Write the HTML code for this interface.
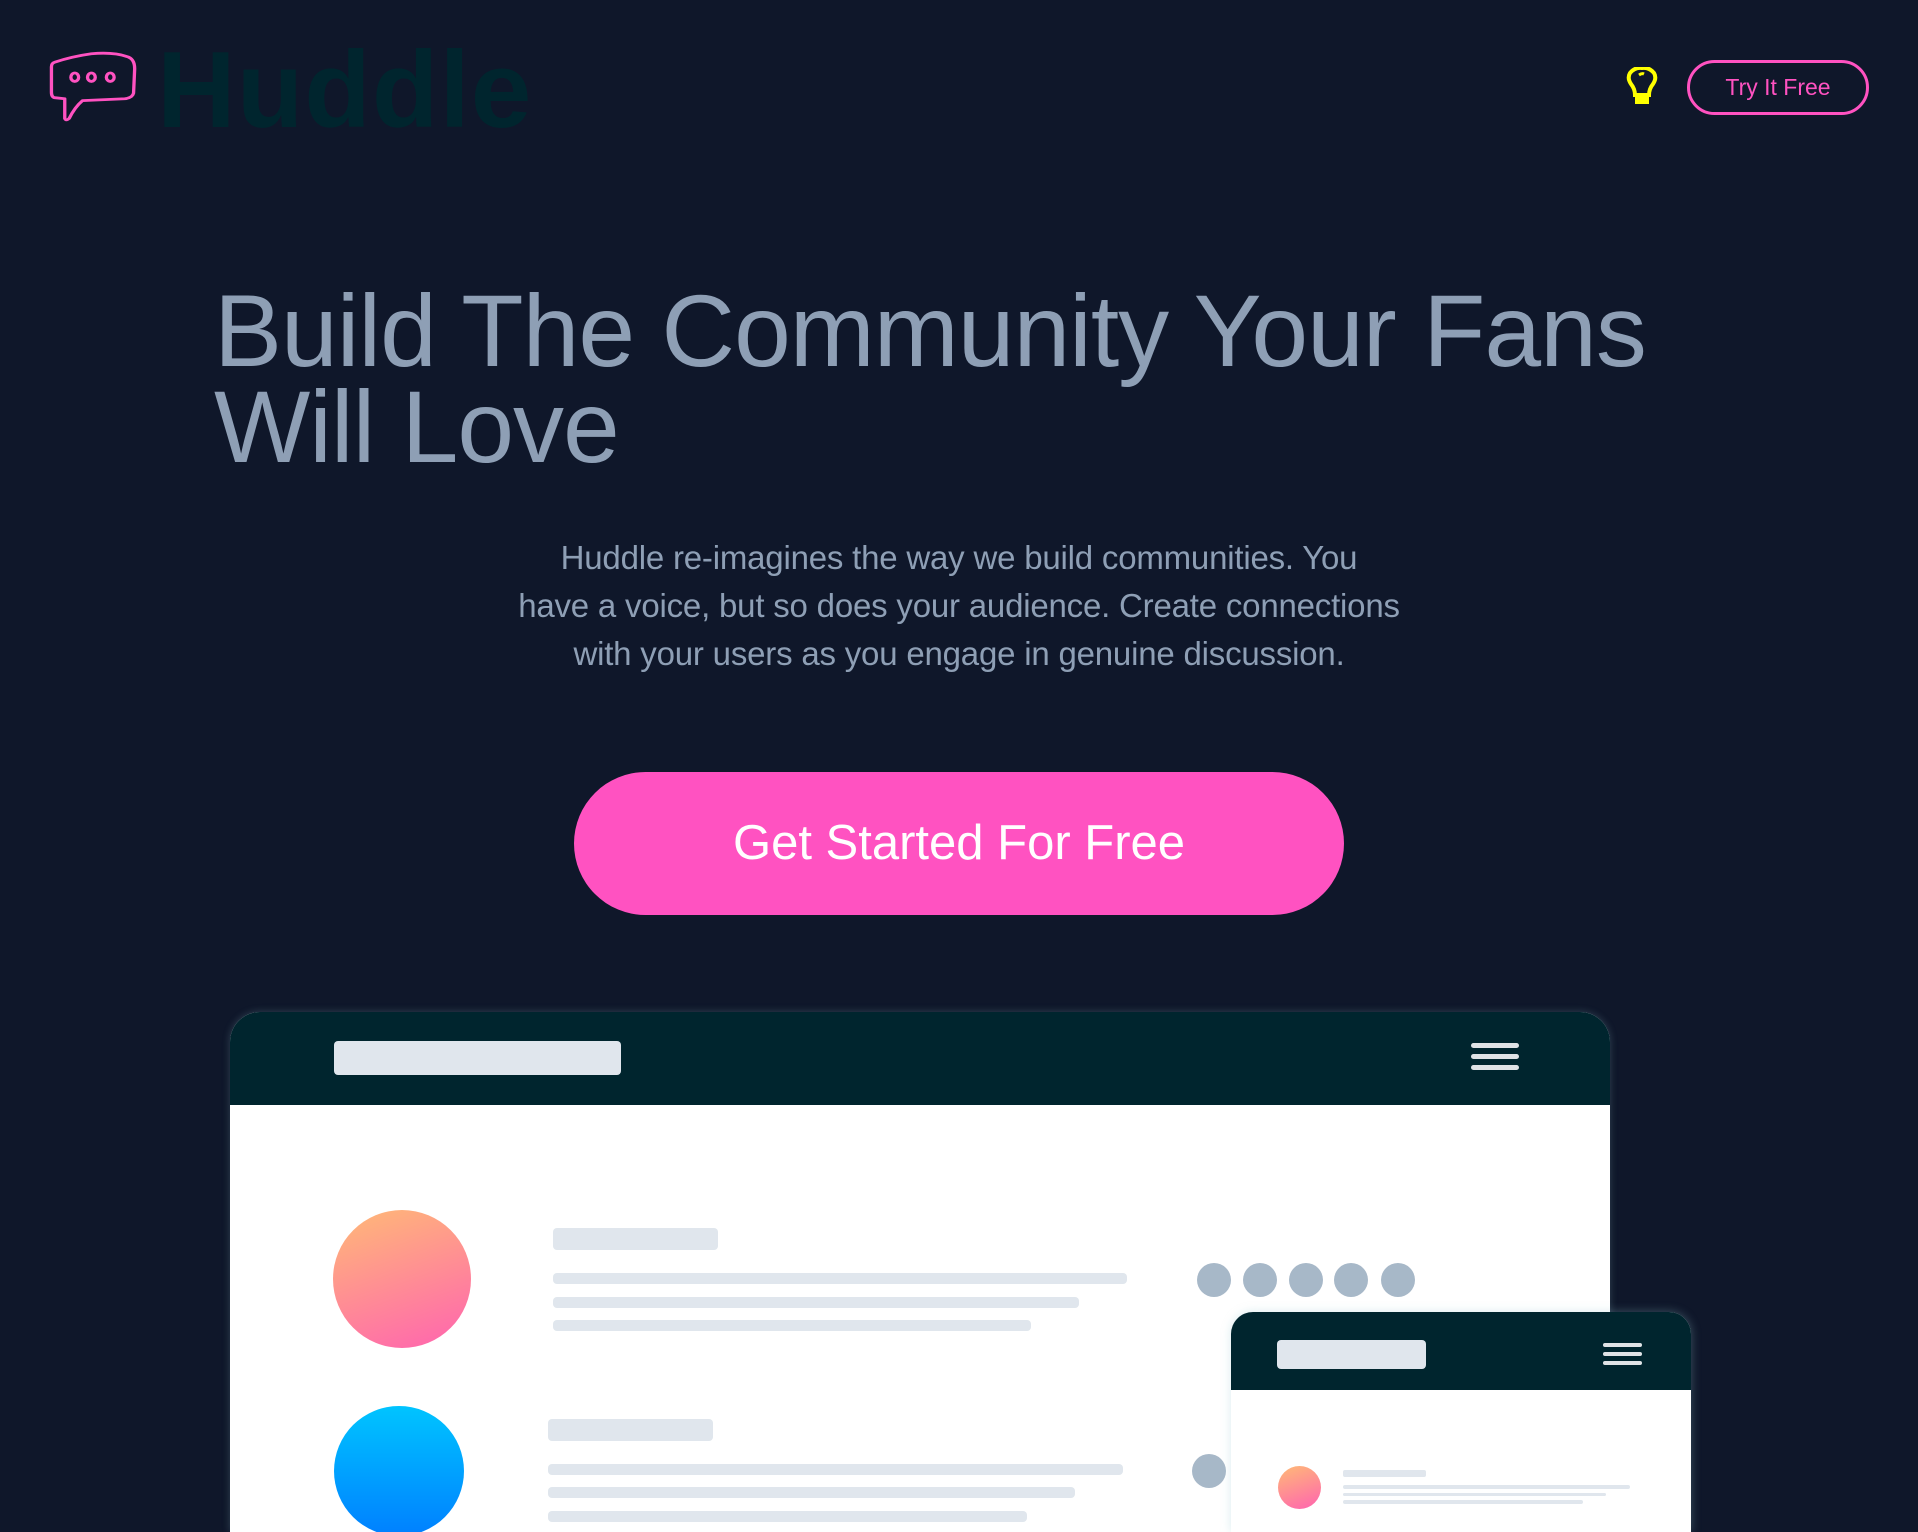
<!DOCTYPE html>
<html><head><meta charset="utf-8"><style>
*{margin:0;padding:0;box-sizing:border-box}
html,body{width:1918px;height:1518px;overflow:hidden;background:#0f172a;font-family:"Liberation Sans",sans-serif}
.abs{position:absolute}
h1{position:absolute;left:214px;top:283px;font-size:102px;line-height:96px;font-weight:normal;color:#8e9fb5;letter-spacing:-1px;white-space:nowrap}
p.lead{position:absolute;left:409px;width:1100px;top:534px;text-align:center;font-size:33px;line-height:48px;color:#8e9fb5;letter-spacing:-0.2px}
.cta{position:absolute;left:574px;top:772px;width:770px;height:143px;border-radius:72px;background:#ff52c1;color:#fff;font-size:49px;text-align:center;line-height:143px}
.try{position:absolute;left:1687px;top:60px;width:182px;height:55px;border:3px solid #ff52c1;border-radius:28px;color:#ff52c1;font-size:23px;text-align:center;line-height:49px}
.bar{position:absolute;background:#e0e6ed;border-radius:4px}
.dot{position:absolute;width:34px;height:34px;border-radius:50%;background:#a7b8c8}
.hb span{display:block;background:#dfe3e6;border-radius:3px}
</style></head><body>
<svg class="abs" style="left:47px;top:50px" width="91" height="75" viewBox="0 0 82 80" preserveAspectRatio="none" fill="none" stroke="#ff52c1" stroke-width="3" stroke-linejoin="round" stroke-linecap="round">
<path d="M7 13 Q4 14 4 18 L4 45 Q4 51 8 51 L16 52 L16 73 Q17 76 20 73 Q25 61 32 54 L70 52 Q77 51 78 46 L79 20 Q79 9 72 7 Q60 2 40 4 Q22 7 7 13Z"/>
<ellipse cx="25" cy="29" rx="3.5" ry="4.5"/><ellipse cx="40" cy="29" rx="3.5" ry="4.5"/><ellipse cx="57" cy="29" rx="3.5" ry="4.5"/>
</svg>
<div class="abs" style="left:157px;top:28px;font-size:109px;font-weight:bold;color:#00252e;letter-spacing:1px;line-height:124px">Huddle</div>
<svg class="abs" style="left:1626px;top:67px" width="32" height="42" viewBox="0 0 32 42" fill="none" stroke="#ffff00" stroke-width="4">
<path d="M9 28 Q9 22 5 17 Q1 11 4 6 Q9 0 16 1 Q23 0 28 6 Q31 11 27 17 Q23 22 23 28 Z"/>
<path d="M13 8 Q16 6 18 7" stroke-width="3"/>
<rect x="9" y="30" width="14" height="7" fill="#ffff00" stroke="none"/>
</svg>
<div class="try">Try It Free</div>
<h1>Build The Community Your Fans<br>Will Love</h1>
<p class="lead">Huddle re-imagines the way we build communities. You<br>have a voice, but so does your audience. Create connections<br>with your users as you engage in genuine discussion.</p>
<div class="cta">Get Started For Free</div>

<div class="abs" style="left:230px;top:1012px;width:1380px;height:520px;background:#fff;border-radius:30px 30px 0 0;overflow:hidden;box-shadow:0 0 8px rgba(150,200,210,.25)">
 <div class="abs" style="left:0;top:0;width:100%;height:93px;background:#00252e"></div>
 <div class="bar" style="left:104px;top:29px;width:287px;height:34px"></div>
 <div class="abs hb" style="left:1241px;top:31px;width:48px"><span style="height:5px"></span><span style="height:5px;margin-top:6px"></span><span style="height:5px;margin-top:6px"></span></div>
 <div class="abs" style="left:103px;top:198px;width:138px;height:138px;border-radius:50%;background:linear-gradient(160deg,#ffba76,#ff63b0)"></div>
 <div class="bar" style="left:323px;top:216px;width:165px;height:22px"></div>
 <div class="bar" style="left:323px;top:261px;width:574px;height:11px"></div>
 <div class="bar" style="left:323px;top:285px;width:526px;height:11px"></div>
 <div class="bar" style="left:323px;top:308px;width:478px;height:11px"></div>
 <div class="abs" style="left:104px;top:394px;width:130px;height:130px;border-radius:50%;background:linear-gradient(180deg,#00c4ff,#0080ff)"></div>
 <div class="bar" style="left:318px;top:407px;width:165px;height:22px"></div>
 <div class="bar" style="left:318px;top:452px;width:575px;height:11px"></div>
 <div class="bar" style="left:318px;top:475px;width:527px;height:11px"></div>
 <div class="bar" style="left:318px;top:499px;width:479px;height:11px"></div>
</div>
<div class="dot" style="left:1197px;top:1263px"></div>
<div class="dot" style="left:1243px;top:1263px"></div>
<div class="dot" style="left:1289px;top:1263px"></div>
<div class="dot" style="left:1334px;top:1263px"></div>
<div class="dot" style="left:1381px;top:1263px"></div>
<div class="dot" style="left:1192px;top:1454px"></div>

<div class="abs" style="left:1231px;top:1312px;width:460px;height:220px;background:#fff;border-radius:22px 22px 0 0;overflow:hidden;box-shadow:0 0 10px rgba(150,200,210,.35)">
 <div class="abs" style="left:0;top:0;width:100%;height:78px;background:#00252e"></div>
 <div class="bar" style="left:46px;top:28px;width:149px;height:29px"></div>
 <div class="abs hb" style="left:372px;top:31px;width:39px"><span style="height:4px"></span><span style="height:4px;margin-top:5px"></span><span style="height:4px;margin-top:5px"></span></div>
 <div class="abs" style="left:47px;top:154px;width:43px;height:43px;border-radius:50%;background:linear-gradient(160deg,#ffba76,#ff63b0)"></div>
 <div class="bar" style="left:112px;top:158px;width:83px;height:7px;border-radius:2px"></div>
 <div class="bar" style="left:112px;top:173px;width:287px;height:4px;border-radius:2px"></div>
 <div class="bar" style="left:112px;top:181px;width:263px;height:3px;border-radius:2px"></div>
 <div class="bar" style="left:112px;top:188px;width:240px;height:4px;border-radius:2px"></div>
</div>
</body></html>
